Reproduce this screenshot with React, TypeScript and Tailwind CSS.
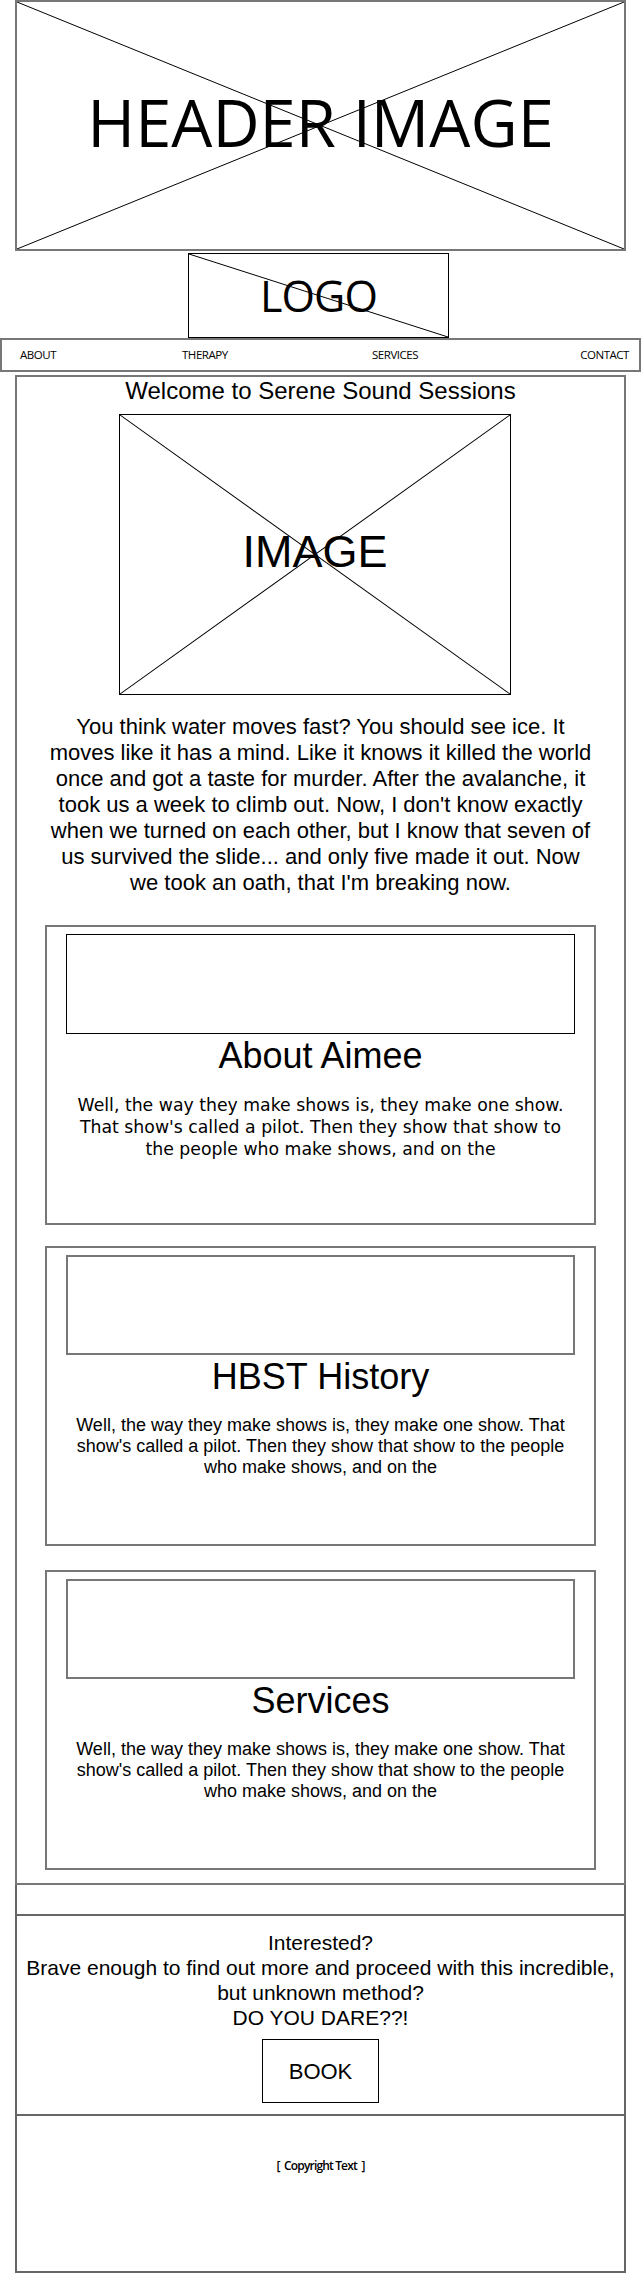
import React from 'react';

const arial = { fontFamily: '"Liberation Sans", Arial, sans-serif' };

// placeholder cross drawn over a box
const Cross = ({ single = false }: { single?: boolean }) => (
  <svg className="absolute inset-0 h-full w-full" viewBox="0 0 100 100" preserveAspectRatio="none">
    <line x1="0" y1="0" x2="100" y2="100" stroke="#000" strokeWidth="1" vectorEffect="non-scaling-stroke" />
    {!single && <line x1="100" y1="0" x2="0" y2="100" stroke="#000" strokeWidth="1" vectorEffect="non-scaling-stroke" />}
  </svg>
);

const body =
  "Well, the way they make shows is, they make one show. That show's called a pilot. Then they show that show to the people who make shows, and on the";

const Card: React.FC<{ title: string; first?: boolean; className?: string }> = ({ title, first, className }) => (
  <div className={`mx-[28px] h-[300px] border-2 border-[#777] ${className ?? ''}`}>
    <div className={`mx-[19px] mt-[7px] h-[100px] ${first ? 'border border-black' : 'border-2 border-[#777]'}`} />
    <h2 className="mt-[2px] text-center text-[36px] leading-[40px] text-black font-['Liberation_Sans',Arial,sans-serif]">
      {title}
    </h2>
    {first ? (
      <p className="mt-[18px] px-[22px] text-center text-[17.3px] leading-[22px] text-black font-['DejaVu_Sans',sans-serif]">
        {body}
      </p>
    ) : (
      <p className="mt-[18px] px-[23px] text-center text-[18px] leading-[21px] text-black font-['Liberation_Sans',Arial,sans-serif]">
        {body}
      </p>
    )}
  </div>
);

export default function App() {
  return (
    <div className="w-[641px] bg-white text-black font-['Open_Sans',sans-serif]">
      {/* header image */}
      <div className="relative mx-[15px] flex h-[251px] items-center justify-center border-2 border-[#777]">
        <Cross />
        <span className="relative -mt-[6px] text-[65px] leading-none text-black">HEADER IMAGE</span>
      </div>

      {/* logo */}
      <div className="relative ml-[188px] mt-[2px] flex h-[85px] w-[261px] items-center justify-center border border-black">
        <Cross single />
        <span className="relative text-[43px] leading-none tracking-[-0.02em]">LOGO</span>
      </div>

      {/* nav */}
      <nav className="flex h-[34px] items-center border-2 border-[#777] text-[11.5px] font-medium tracking-[-0.04em] text-black">
        <span className="w-[180px] pl-[18px]">ABOUT</span>
        <span className="w-[190px]">THERAPY</span>
        <span className="flex-1">SERVICES</span>
        <span className="pr-[10px]">CONTACT</span>
      </nav>

      {/* main */}
      <main className="mx-[15px] mt-[3px] border-2 border-[#777] pb-[13px]" style={arial}>
        <h1 className="text-center text-[24px] leading-[28px]">Welcome to Serene Sound Sessions</h1>
        <div className="relative ml-[102px] mt-[9px] flex h-[281px] w-[392px] items-center justify-center border border-black">
          <Cross />
          <span className="relative -mt-[6px] text-[45px] leading-none">IMAGE</span>
        </div>
        <p className="mt-[19px] px-[28px] text-center text-[22px] leading-[26px]">
          You think water moves fast? You should see ice. It moves like it has a mind. Like it knows it killed the world
          once and got a taste for murder. After the avalanche, it took us a week to climb out. Now, I don't know exactly
          when we turned on each other, but I know that seven of us survived the slide... and only five made it out. Now
          we took an oath, that I'm breaking now.
        </p>
        <Card title="About Aimee" first className="mt-[29px]" />
        <Card title="HBST History" className="mt-[21px]" />
        <Card title="Services" className="mt-[24px]" />
      </main>

      <div className="mx-[15px] h-[31px] border-x-2 border-b-2 border-[#666]" />

      <section
        className="mx-[15px] flex h-[200px] flex-col items-center border-x-2 border-b-2 border-[#666] pt-[14px] text-center text-[21px] leading-[25px]"
        style={arial}
      >
        <p>Interested?</p>
        <p>Brave enough to find out more and proceed with this incredible, but unknown method?</p>
        <p>DO YOU DARE??!</p>
        <button className="mt-[9px] flex h-[64px] w-[117px] items-center justify-center border border-black text-[22px]">
          BOOK
        </button>
      </section>

      <footer className="mx-[15px] h-[157px] border-x-2 border-b-2 border-[#666] pt-[36px] text-center">
        <span className="text-[12px] font-semibold tracking-[-0.07em]">[&nbsp;&nbsp;Copyright Text&nbsp;&nbsp;]</span>
      </footer>
    </div>
  );
}
